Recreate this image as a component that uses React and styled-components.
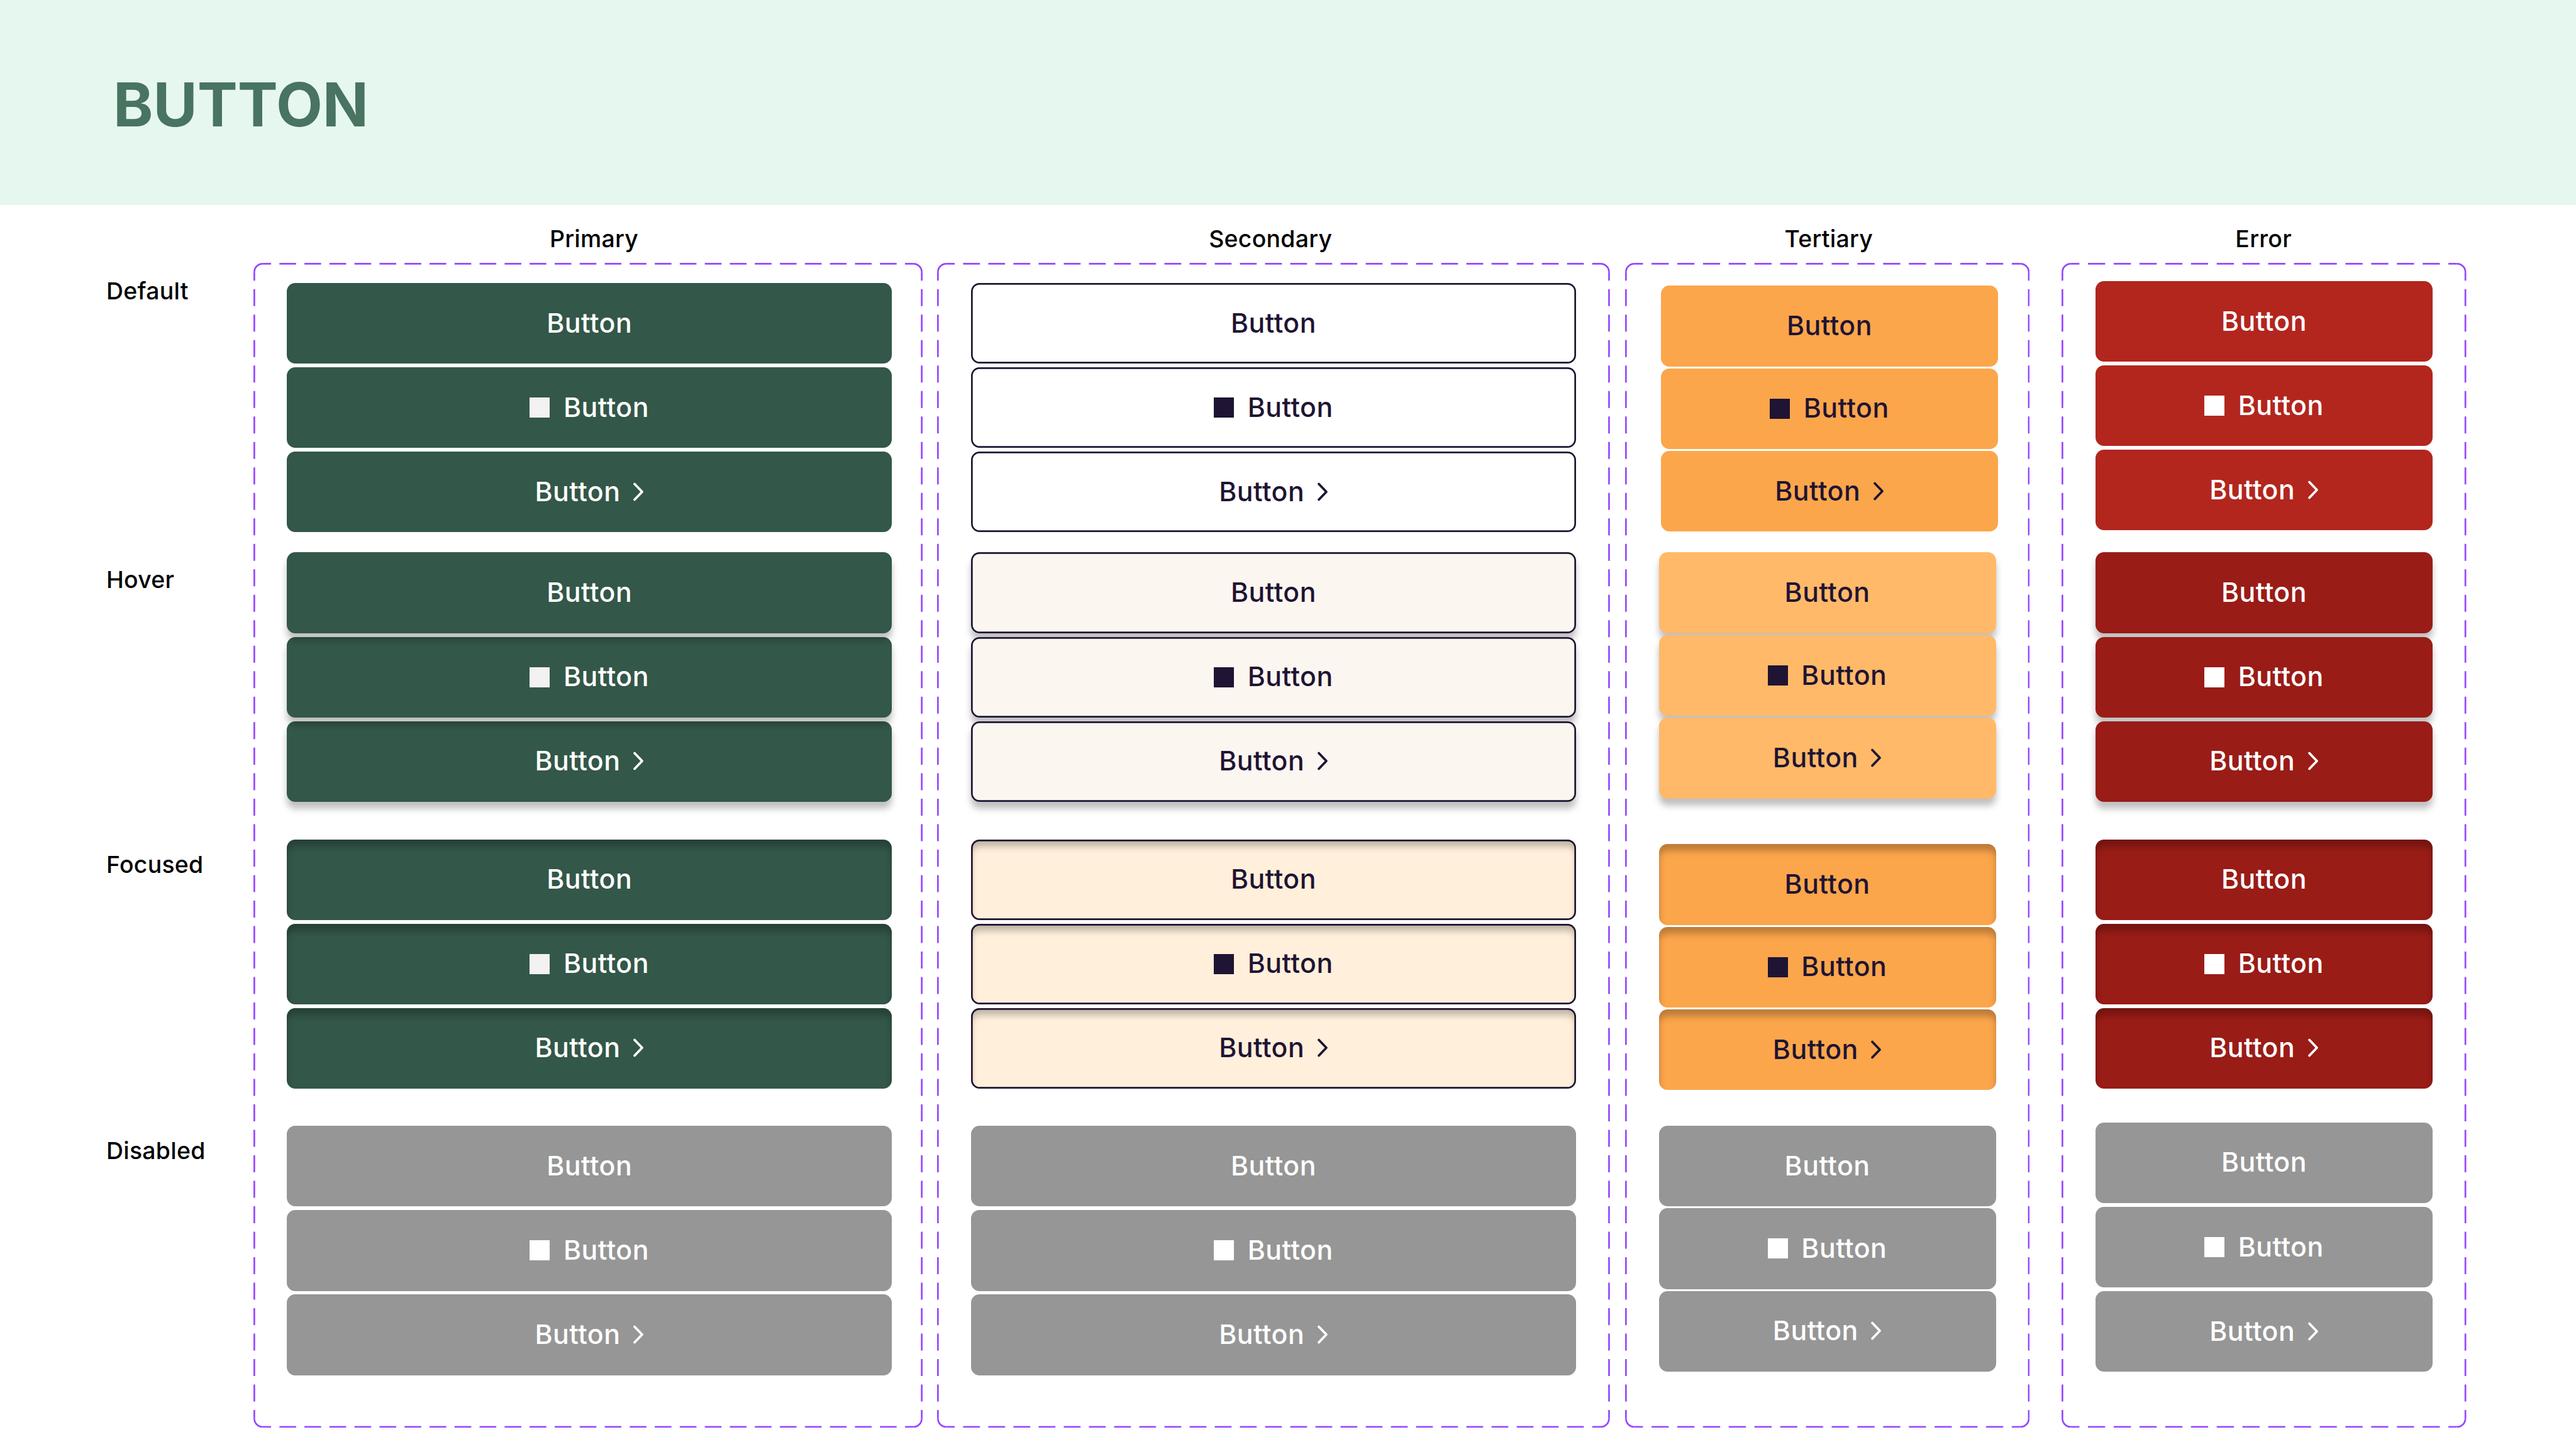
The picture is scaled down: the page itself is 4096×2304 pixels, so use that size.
import React from 'react'
import styled, { createGlobalStyle } from 'styled-components'

const GlobalStyle = createGlobalStyle`
    * {
        box-sizing: border-box;
    }

    body {
        margin: 0;
        background-color: #ffffff;
        font-family: 'Inter', sans-serif;
    }
`

const PageStyled = styled.div`
    width: 4096px;
    height: 2304px;
    overflow: hidden;
`

const HeaderStyled = styled.header`
    height: 326px;
    padding-left: 180px;
    display: flex;
    align-items: center;
    background-color: #e6f7ef;
`

const TitleStyled = styled.h1`
    margin: 0;
    padding-top: 8px;
    font-size: 96px;
    font-weight: 700;
    line-height: 1.2;
    color: #487461;
`

const BoardStyled = styled.main`
    display: flex;
    align-items: flex-start;
    padding: 29px 0 0 169px;
`

const StateListStyled = styled.div`
    width: 233.5px;
    padding-top: 85px;
`

const StateStyled = styled.div`
    height: ${(props) => props.$height}px;
    font-size: 37.4px;
    font-weight: 500;
    letter-spacing: 0.27px;
    line-height: 45px;
    color: #000000;
`

const ColumnStyled = styled.section`
    width: ${(props) => props.$width}px;
    margin-right: ${(props) => props.$space}px;
`

const ColumnTitleStyled = styled.h2`
    margin: 0 0 0 ${(props) => props.$shift}px;
    height: 62.6px;
    font-size: 37.4px;
    font-weight: 500;
    letter-spacing: 0.27px;
    line-height: 49px;
    text-align: center;
    color: #000000;
`

const PanelStyled = styled.div`
    position: relative;
    height: 1852.3px;
    padding-left: 53.5px;
`

const OutlineStyled = styled.svg`
    position: absolute;
    top: 0;
    left: 0;
    fill: none;
    stroke: #9747ff;
    stroke-width: 2.7px;
`

const GroupStyled = styled.div`
    display: flex;
    flex-direction: column;
    gap: ${(props) => props.$gap}px;
    padding-top: ${(props) => props.$top}px;
    margin-left: ${(props) => props.$left || 0}px;
`

const outline = 'inset 0 0 0 2.7px #1f1433'
const hoverShadow = '0 10.7px 10.7px rgba(0, 0, 0, 0.25)'
const focusShadow = 'inset 0 10.7px 10.7px rgba(0, 0, 0, 0.25)'

const ButtonStyled = styled.button`
    position: relative;
    z-index: ${(props) => props.$layer || 'auto'};
    width: ${(props) => props.$width}px;
    height: 128.3px;
    padding: 0;
    border: none;
    border-radius: 13.4px;
    display: flex;
    justify-content: center;
    align-items: center;
    background-color: ${(props) => props.$bg};
    box-shadow: ${(props) => props.$shadow || 'none'};
    color: ${(props) => props.$color};
    font-family: inherit;
    font-size: 42.8px;
    font-weight: 500;
    letter-spacing: 0.5px;
    line-height: 64px;
`

const LabelStyled = styled.span`
    padding-bottom: 1px;
`

const SquareStyled = styled.span`
    width: 32px;
    height: 32px;
    margin-right: 21.5px;
    background-color: ${(props) => props.$color};
`

const ChevronStyled = styled.svg`
    width: 18px;
    height: 32px;
    margin: 0 0 1px 19.5px;
    fill: none;
    stroke: currentColor;
    stroke-width: 3.8px;
    stroke-linecap: round;
    stroke-linejoin: round;
`

const dark = '#1f1433'
const disabled = { bg: '#969696', color: '#ffffff' }

const states = [
    { name: 'Default', height: 458.5 },
    { name: 'Hover', height: 453 },
    { name: 'Focused', height: 455.8 },
    { name: 'Disabled', height: 60 },
]

const columns = [
    {
        name: 'Primary',
        width: 1064,
        space: 23.8,
        shift: 20,
        buttonWidth: 962.3,
        gap: 5.8,
        groups: [
            { top: 32.3, bg: '#335748', color: '#ffffff', square: '#f3f1f1' },
            {
                top: 32.1,
                bg: '#335748',
                color: '#ffffff',
                square: '#f3f1f1',
                shadow: hoverShadow,
                firstOnTop: true,
            },
            { top: 59.7, bg: '#335748', color: '#ffffff', square: '#f3f1f1', shadow: focusShadow },
            { top: 59, ...disabled },
        ],
    },
    {
        name: 'Secondary',
        width: 1069.8,
        space: 24,
        shift: -10,
        buttonWidth: 962.3,
        gap: 5.8,
        groups: [
            { top: 32.3, bg: '#ffffff', color: dark, shadow: outline },
            { top: 32.1, bg: '#fcf6f0', color: dark, shadow: `${outline}, ${hoverShadow}` },
            { top: 59.7, bg: '#ffefdb', color: dark, shadow: `${outline}, ${focusShadow}` },
            { top: 59, ...disabled },
        ],
    },
    {
        name: 'Tertiary',
        width: 643.3,
        space: 51,
        shift: 4,
        buttonWidth: 536,
        gap: 3.1,
        groups: [
            { top: 36.8, left: 3.4, bg: '#fca64b', color: dark },
            { top: 33, bg: '#ffb969', color: dark, shadow: hoverShadow },
            { top: 72.8, bg: '#fca64b', color: dark, shadow: focusShadow },
            { top: 56.5, ...disabled },
        ],
    },
    {
        name: 'Error',
        width: 643.5,
        space: 0,
        shift: -2,
        buttonWidth: 536,
        gap: 5.8,
        groups: [
            { top: 29.3, bg: '#b2261e', color: '#ffffff' },
            { top: 35.1, bg: '#991c17', color: '#ffffff', shadow: hoverShadow },
            { top: 59.7, bg: '#991c17', color: '#ffffff', shadow: focusShadow },
            { top: 53.7, ...disabled },
        ],
    },
]

// Every side gets a whole number of dashes, with half a dash next to each corner
function Outline({ width, height }) {
    const inset = 1.35
    const r = 13.4
    const right = width - inset
    const bottom = height - inset

    const dashes = (length) => {
        const period = length / Math.round(length / 40.2)
        const dash = (period * 2) / 3
        return { strokeDasharray: `${dash} ${period - dash}`, strokeDashoffset: dash / 2 }
    }
    const across = dashes(right - inset - 2 * r)
    const down = dashes(bottom - inset - 2 * r)

    return (
        <OutlineStyled width={width} height={height}>
            <path d={`M${inset + r} ${inset}H${right - r}`} {...across} />
            <path d={`M${inset + r} ${bottom}H${right - r}`} {...across} />
            <path d={`M${inset} ${inset + r}V${bottom - r}`} {...down} />
            <path d={`M${right} ${inset + r}V${bottom - r}`} {...down} />
            <path d={`M${inset} ${inset + r}a${r} ${r} 0 0 1 ${r} ${-r}`} />
            <path d={`M${right - r} ${inset}a${r} ${r} 0 0 1 ${r} ${r}`} />
            <path d={`M${right} ${bottom - r}a${r} ${r} 0 0 1 ${-r} ${r}`} />
            <path d={`M${inset + r} ${bottom}a${r} ${r} 0 0 1 ${-r} ${-r}`} />
        </OutlineStyled>
    )
}

function ButtonGroup({ group, width, gap }) {
    const look = {
        $width: width,
        $bg: group.bg,
        $color: group.color,
        $shadow: group.shadow,
    }

    return (
        <GroupStyled $top={group.top} $left={group.left} $gap={gap}>
            <ButtonStyled {...look} $layer={group.firstOnTop && 3}>
                <LabelStyled>Button</LabelStyled>
            </ButtonStyled>
            <ButtonStyled {...look} $layer={group.firstOnTop && 2}>
                <SquareStyled $color={group.square || group.color} />
                <LabelStyled>Button</LabelStyled>
            </ButtonStyled>
            <ButtonStyled {...look} $layer={group.firstOnTop && 1}>
                <LabelStyled>Button</LabelStyled>
                <ChevronStyled viewBox="0 0 18 32">
                    <path d="M3 3.5L15 16L3 28.5" />
                </ChevronStyled>
            </ButtonStyled>
        </GroupStyled>
    )
}

function App() {
    return (
        <PageStyled>
            <GlobalStyle />
            <HeaderStyled>
                <TitleStyled>BUTTON</TitleStyled>
            </HeaderStyled>
            <BoardStyled>
                <StateListStyled>
                    {states.map((state) => (
                        <StateStyled key={state.name} $height={state.height}>
                            {state.name}
                        </StateStyled>
                    ))}
                </StateListStyled>
                {columns.map((column) => (
                    <ColumnStyled key={column.name} $width={column.width} $space={column.space}>
                        <ColumnTitleStyled $shift={column.shift}>{column.name}</ColumnTitleStyled>
                        <PanelStyled>
                            <Outline width={column.width} height={1852.3} />
                            {column.groups.map((group, index) => (
                                <ButtonGroup
                                    key={index}
                                    group={group}
                                    width={column.buttonWidth}
                                    gap={column.gap}
                                />
                            ))}
                        </PanelStyled>
                    </ColumnStyled>
                ))}
            </BoardStyled>
        </PageStyled>
    )
}

export default App
